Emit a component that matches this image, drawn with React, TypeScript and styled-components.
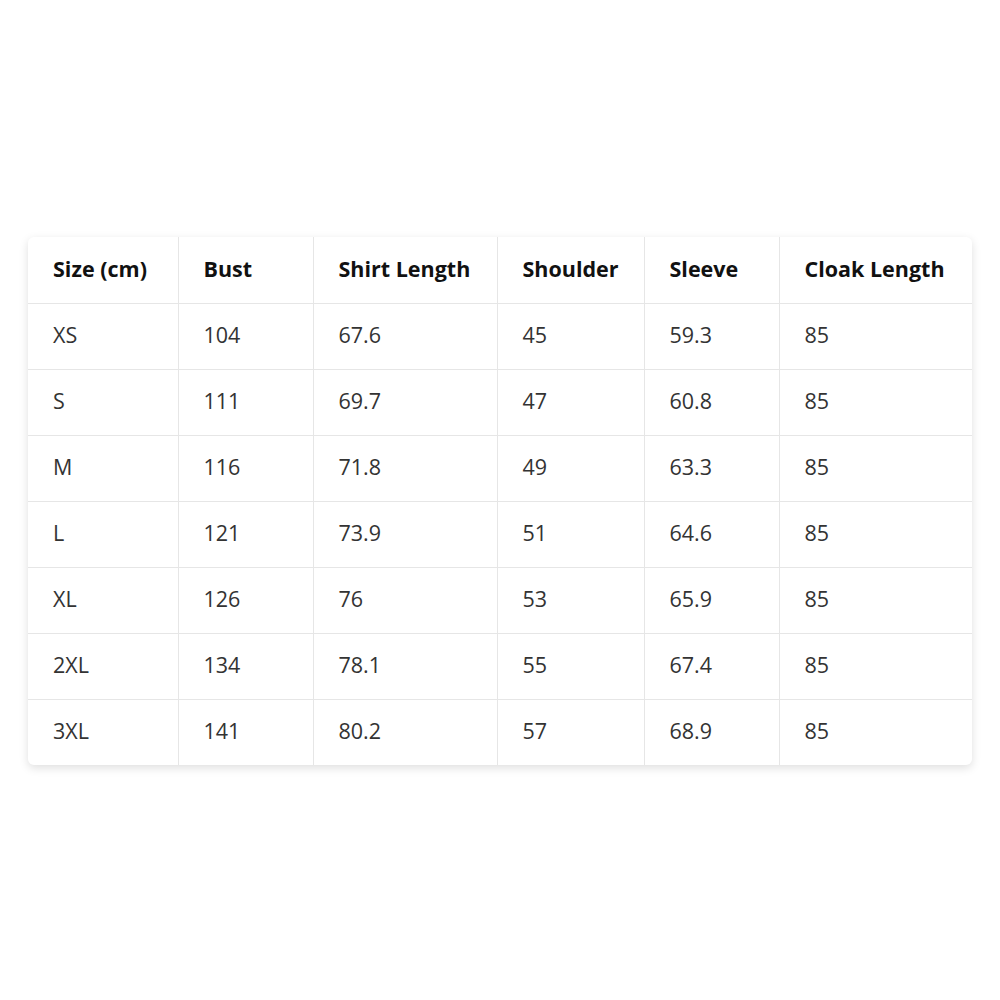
import styled, { createGlobalStyle } from 'styled-components';

const GlobalStyle = createGlobalStyle`
  html, body {
    margin: 0;
    padding: 0;
    background: #ffffff;
  }
  body {
    font-family: "Open Sans", "Noto Sans", sans-serif;
  }
`;

const Page = styled.div`
  width: 1000px;
  height: 1000px;
  display: flex;
  align-items: center;
  justify-content: center;
  padding-top: 2px;
  box-sizing: border-box;
`;

const Card = styled.div`
  width: 944px;
  background: #ffffff;
  border-radius: 6px;
  box-shadow: 0 3px 10px rgba(0, 0, 0, 0.13);
  overflow: hidden;
`;

const Table = styled.table`
  width: 100%;
  border-collapse: collapse;
  table-layout: fixed;
`;

const Row = styled.tr`
  height: 66px;
  border-top: 1px solid #e6e6e6;
`;

const HeadRow = styled.tr`
  height: 66px;
`;

const HeadCell = styled.th<{ $w: number }>`
  width: ${(p) => p.$w}px;
  padding: 0 0 3px 25px;
  text-align: left;
  font-size: 21.5px;
  font-weight: 700;
  color: #111111;
  border-left: 1px solid #e6e6e6;
  box-sizing: border-box;

  &:first-child {
    border-left: none;
  }
`;

const Cell = styled.td`
  padding: 0 0 3px 25px;
  font-size: 21.5px;
  font-weight: 400;
  color: #333333;
  border-left: 1px solid #e6e6e6;

  &:first-child {
    border-left: none;
  }
`;

const columns = [
  { label: 'Size (cm)', w: 150 },
  { label: 'Bust', w: 135 },
  { label: 'Shirt Length', w: 184 },
  { label: 'Shoulder', w: 147 },
  { label: 'Sleeve', w: 135 },
  { label: 'Cloak Length', w: 193 },
];

const rows = [
  ['XS', '104', '67.6', '45', '59.3', '85'],
  ['S', '111', '69.7', '47', '60.8', '85'],
  ['M', '116', '71.8', '49', '63.3', '85'],
  ['L', '121', '73.9', '51', '64.6', '85'],
  ['XL', '126', '76', '53', '65.9', '85'],
  ['2XL', '134', '78.1', '55', '67.4', '85'],
  ['3XL', '141', '80.2', '57', '68.9', '85'],
];

export default function App() {
  return (
    <>
      <GlobalStyle />
      <Page>
        <Card>
          <Table>
            <thead>
              <HeadRow>
                {columns.map((c) => (
                  <HeadCell key={c.label} $w={c.w}>
                    {c.label}
                  </HeadCell>
                ))}
              </HeadRow>
            </thead>
            <tbody>
              {rows.map((r) => (
                <Row key={r[0]}>
                  {r.map((v, i) => (
                    <Cell key={i}>{v}</Cell>
                  ))}
                </Row>
              ))}
            </tbody>
          </Table>
        </Card>
      </Page>
    </>
  );
}
